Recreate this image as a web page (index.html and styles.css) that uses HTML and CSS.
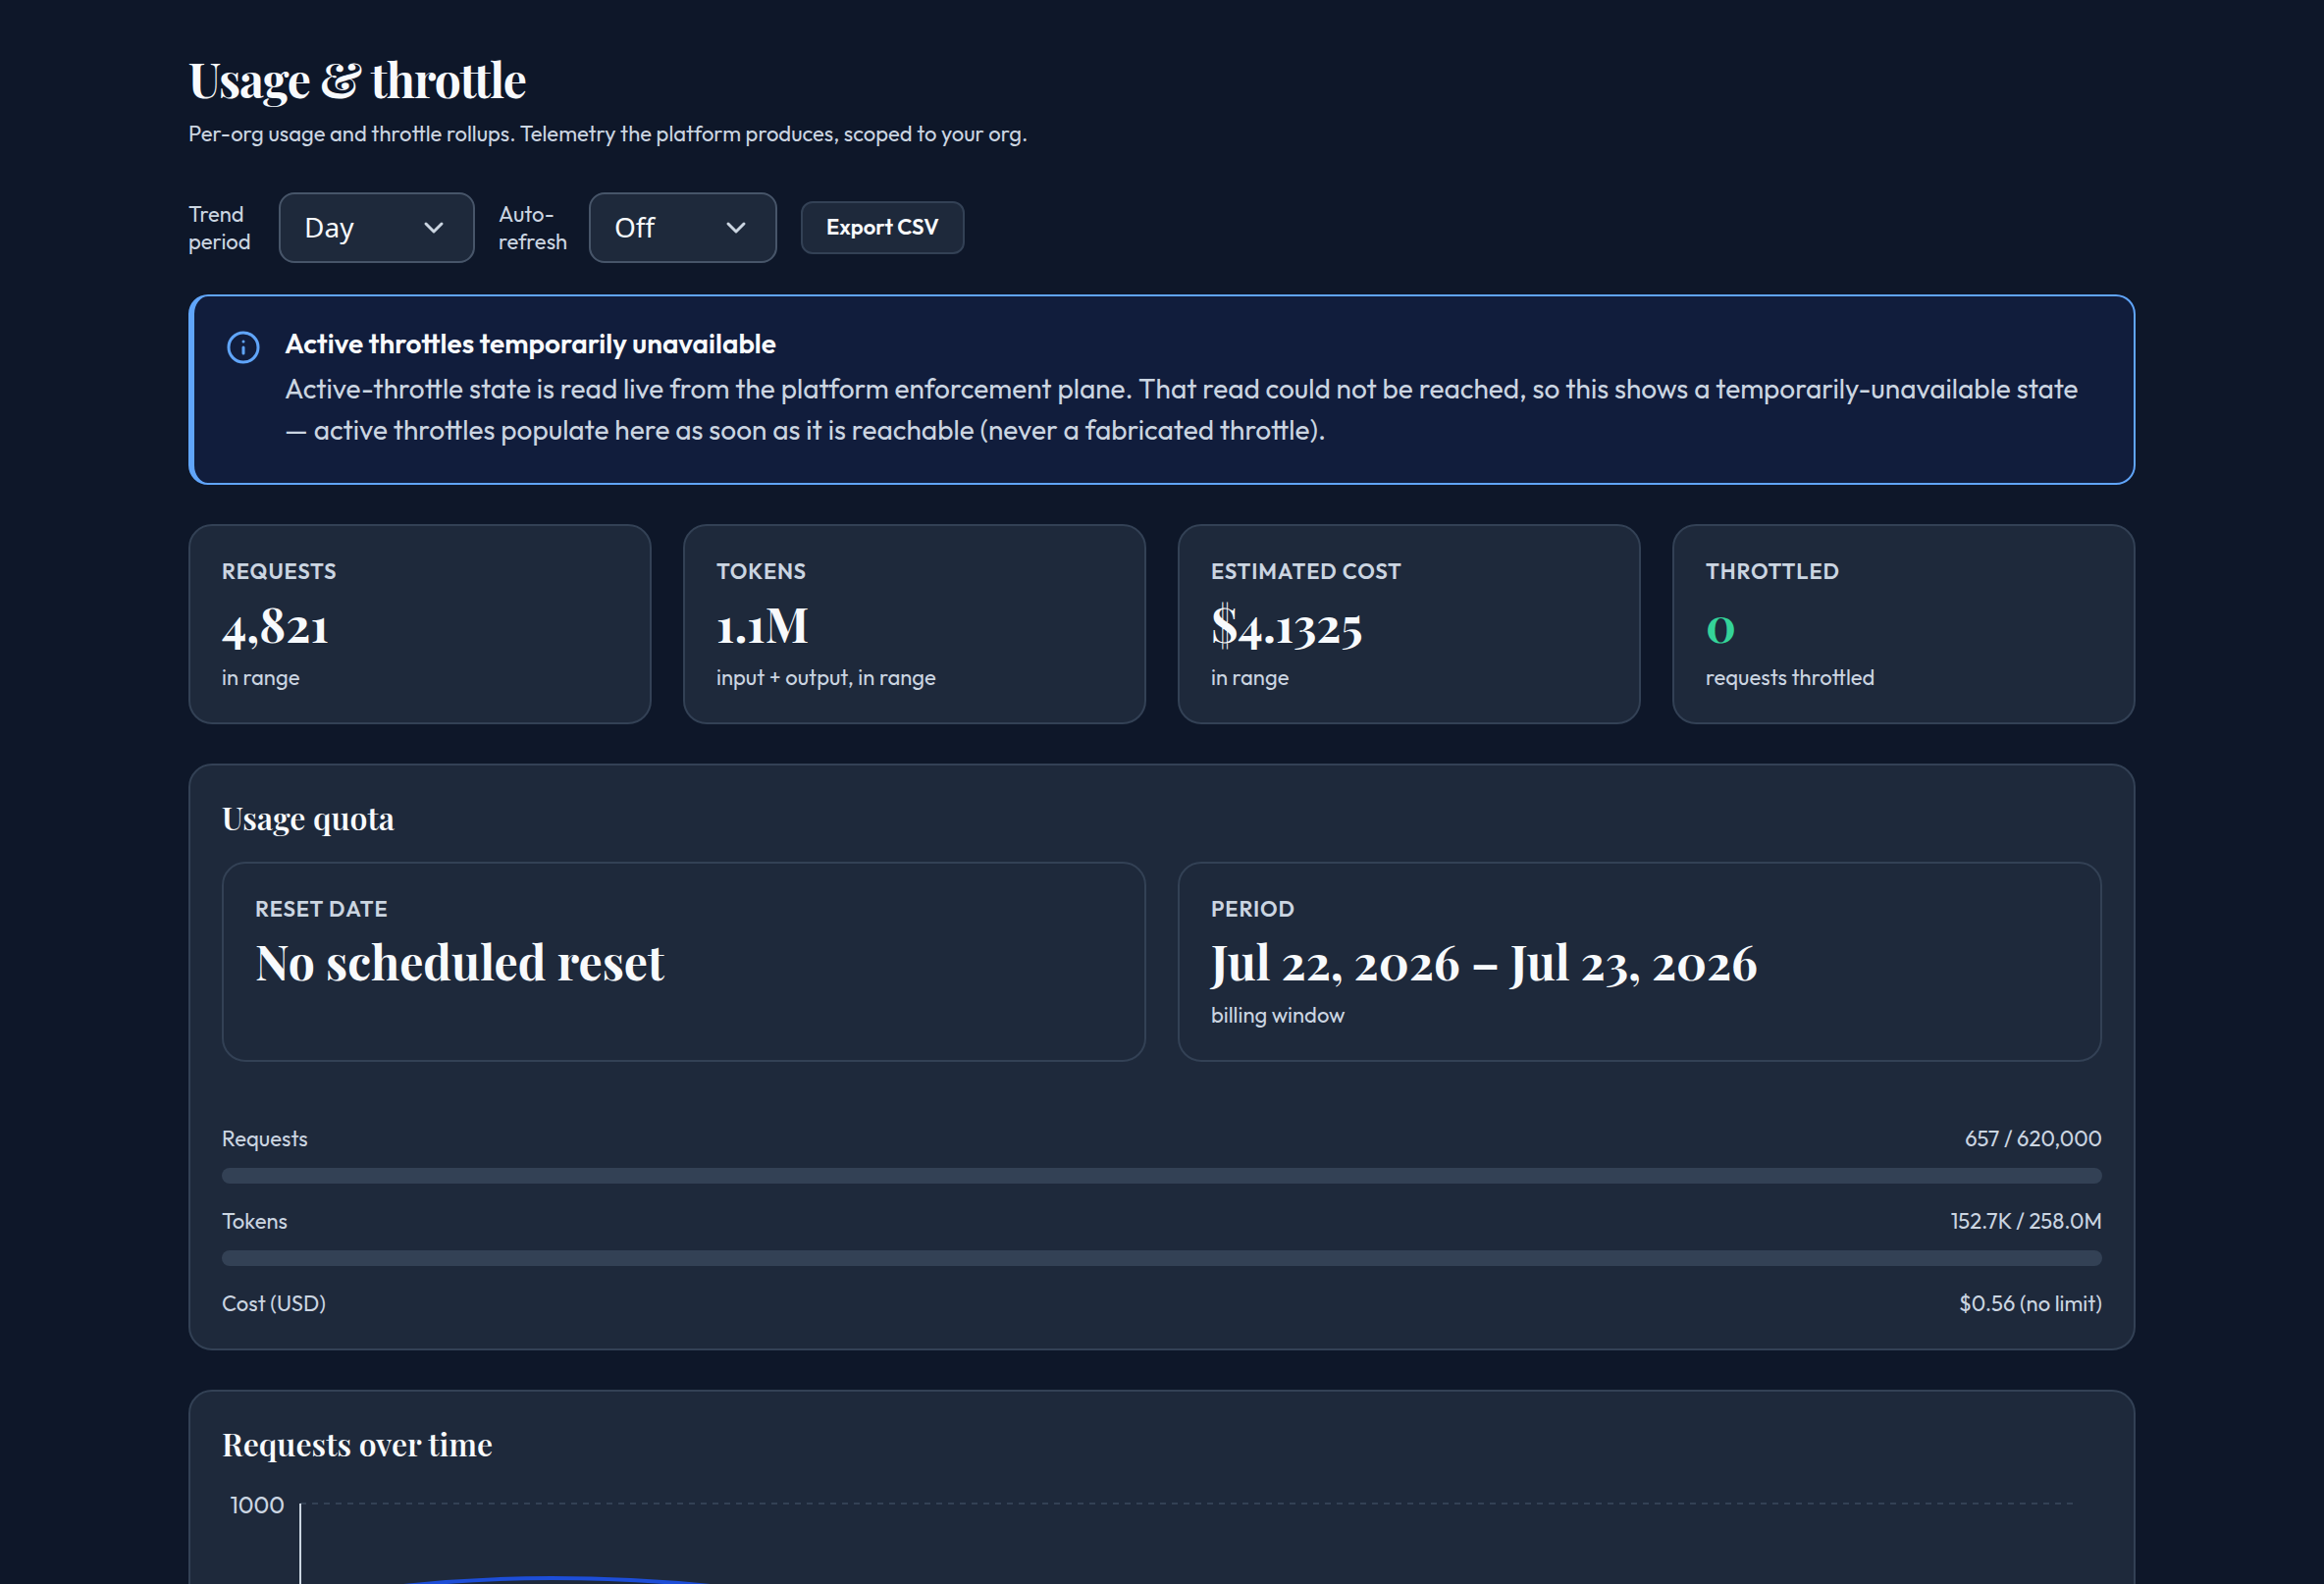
FILE: index.html
```html
<!DOCTYPE html>
<html lang="en">
<head>
<meta charset="utf-8">
<meta name="viewport" content="width=device-width, initial-scale=1">
<title>Usage &amp; throttle</title>
<link rel="stylesheet" href="styles.css">
</head>
<body>
<main class="page">
  <header class="page-header">
    <h1 class="page-title">Usage &amp; throttle</h1>
    <p class="page-subtitle">Per-org usage and throttle rollups. Telemetry the platform produces, scoped to your org.</p>
  </header>

  <div class="toolbar">
    <label class="toolbar-label" for="period">Trend period</label>
    <div class="select-wrap select-wrap-period">
      <select class="select" id="period"><option>Day</option><option>Week</option></select>
      <svg class="chevron" viewBox="0 0 24 24" aria-hidden="true"><path d="M4 8l8 8 8-8"/></svg>
    </div>
    <label class="toolbar-label" for="refresh">Auto-refresh</label>
    <div class="select-wrap select-wrap-refresh">
      <select class="select" id="refresh"><option>Off</option><option>On</option></select>
      <svg class="chevron" viewBox="0 0 24 24" aria-hidden="true"><path d="M4 8l8 8 8-8"/></svg>
    </div>
    <button class="button" type="button">Export CSV</button>
  </div>

  <section class="alert" role="status">
    <svg class="alert-icon" viewBox="0 0 36 36" aria-hidden="true"><circle cx="18" cy="18" r="15"/><path d="M18 18v6M18 12h.01"/></svg>
    <div class="alert-content">
      <h2 class="alert-title">Active throttles temporarily unavailable</h2>
      <p class="alert-text">Active-throttle state is read live from the platform enforcement plane. That read could not be reached, so this shows a temporarily-unavailable state — active throttles populate here as soon as it is reachable (never a fabricated throttle).</p>
    </div>
  </section>

  <section class="stats stats-four">
    <article class="card">
      <h3 class="card-label">Requests</h3>
      <p class="card-value">4,821</p>
      <p class="card-note">in range</p>
    </article>
    <article class="card">
      <h3 class="card-label">Tokens</h3>
      <p class="card-value">1.1M</p>
      <p class="card-note">input + output, in range</p>
    </article>
    <article class="card">
      <h3 class="card-label">Estimated cost</h3>
      <p class="card-value">$4.1325</p>
      <p class="card-note">in range</p>
    </article>
    <article class="card">
      <h3 class="card-label">Throttled</h3>
      <p class="card-value card-value-ok">0</p>
      <p class="card-note">requests throttled</p>
    </article>
  </section>

  <section class="panel">
    <h2 class="panel-title">Usage quota</h2>
    <div class="stats stats-two">
      <article class="card">
        <h3 class="card-label">Reset date</h3>
        <p class="card-value">No scheduled reset</p>
      </article>
      <article class="card">
        <h3 class="card-label">Period</h3>
        <p class="card-value">Jul 22, 2026 – Jul 23, 2026</p>
        <p class="card-note">billing window</p>
      </article>
    </div>
    <div class="meters">
      <div class="meter">
        <div class="meter-row"><span>Requests</span><span>657 / 620,000</span></div>
        <div class="meter-track"></div>
      </div>
      <div class="meter">
        <div class="meter-row"><span>Tokens</span><span>152.7K / 258.0M</span></div>
        <div class="meter-track"></div>
      </div>
      <div class="meter">
        <div class="meter-row"><span>Cost (USD)</span><span>$0.56 (no limit)</span></div>
      </div>
    </div>
  </section>

  <section class="panel">
    <h2 class="panel-title">Requests over time</h2>
    <div class="chart">
      <span class="chart-tick">1000</span>
      <svg class="chart-plot" aria-label="Requests over time">
        <line class="grid-line" x1="1" y1="16" x2="100%" y2="16"/>
        <line class="axis-line" x1="1" y1="16" x2="1" y2="400"/>
        <path class="series" d="M1 115Q129 92 257 92T513 112"/>
      </svg>
    </div>
  </section>
</main>
</body>
</html>
```
FILE: styles.css
```css
* { box-sizing: border-box; }
html, body { height: 100%; }
body {
  margin: 0;
  overflow: hidden;
  background: #0e1729;
  color: #cbd5e1;
  font-family: Outfit, Lato, sans-serif;
  font-size: 22px;
  line-height: 28px;
}
h1, h2, h3, p { margin: 0; }

.page {
  display: flex;
  flex-direction: column;
  gap: 40px;
  padding: 46px 192px 0;
}
.page-title {
  color: #f8fafc;
  font-family: "Playfair Display", "Liberation Serif", serif;
  font-size: 48px;
  font-weight: 700;
  letter-spacing: -1px;
  line-height: 68px;
}
.page-subtitle { margin-top: 8px; }

.toolbar {
  display: flex;
  align-items: center;
  gap: 24px;
  margin-top: 6px;
}
.toolbar-label { width: 68px; }
.select-wrap { position: relative; }
.select-wrap-period { width: 200px; }
.select-wrap-refresh { width: 192px; }
.select {
  width: 100%;
  height: 72px;
  padding: 0 24px 2px;
  appearance: none;
  border: 2px solid #475569;
  border-radius: 16px;
  background: #1e293b;
  color: #f8fafc;
  font-family: "Noto Sans", sans-serif;
  font-size: 28px;
}
.chevron {
  position: absolute;
  top: 24px;
  right: 30px;
  width: 24px;
  height: 24px;
  fill: none;
  stroke: #cbd5e1;
  stroke-width: 3;
  stroke-linecap: round;
  stroke-linejoin: round;
  pointer-events: none;
}
.button {
  height: 54px;
  padding: 0 24px 2px;
  border: 2px solid #334155;
  border-radius: 12px;
  background: #1e293b;
  color: #f8fafc;
  font-family: inherit;
  font-size: 22px;
  font-weight: 600;
}

.alert {
  display: flex;
  gap: 24px;
  margin-top: -8px;
  padding: 28px 32px 33px;
  border: 2px solid #60a5fa;
  border-left-width: 6px;
  border-radius: 20px;
  background: #111d3c;
}
.alert-icon {
  flex: none;
  width: 36px;
  height: 36px;
  margin-top: 6px;
  fill: none;
  stroke: #60a5fa;
  stroke-width: 3;
  stroke-linecap: round;
}
.alert-title {
  color: #f8fafc;
  font-size: 28px;
  font-weight: 600;
  line-height: 40px;
}
.alert-text { margin-top: 5px; font-size: 28px; line-height: 42px; }

.stats { display: grid; gap: 32px; }
.stats-four { grid-template-columns: repeat(4, 1fr); }
.stats-two { grid-template-columns: repeat(2, 1fr); }
.card, .panel {
  border: 2px solid #334155;
  border-radius: 24px;
  background: #1e293b;
}
.card {
  min-height: 204px;
  padding: 32px 32px 28px;
}
.card-label {
  font-size: 22px;
  font-weight: 600;
  letter-spacing: 0.04em;
  text-transform: uppercase;
}
.card-value {
  margin-top: 9px;
  color: #f8fafc;
  font-family: "Playfair Display", "Liberation Serif", serif;
  font-size: 48px;
  font-weight: 700;
  line-height: 60px;
}
.card-value-ok { color: #34d399; }
.card-note { margin-top: 11px; }

.panel { padding: 32px; }
.panel-title {
  margin-bottom: 24px;
  color: #f8fafc;
  font-family: "Playfair Display", "Liberation Serif", serif;
  font-size: 32px;
  font-weight: 600;
  line-height: 42px;
}
.meters {
  display: flex;
  flex-direction: column;
  gap: 24px;
  margin-top: 64px;
}
.meter-row { display: flex; justify-content: space-between; }
.meter-track {
  height: 16px;
  margin-top: 16px;
  border-radius: 8px;
  background: #334155;
}

.chart { display: flex; gap: 15px; padding-right: 30px; }
.chart-tick {
  width: 64px;
  padding-top: 3px;
  font-size: 24px;
  text-align: right;
}
.chart-plot { flex: 1; height: 400px; }
.grid-line { stroke: #334155; stroke-width: 2; stroke-dasharray: 6 6; }
.axis-line { stroke: #cbd5e1; stroke-width: 2; }
.series { fill: none; stroke: #1d4ed8; stroke-width: 4; }
```
